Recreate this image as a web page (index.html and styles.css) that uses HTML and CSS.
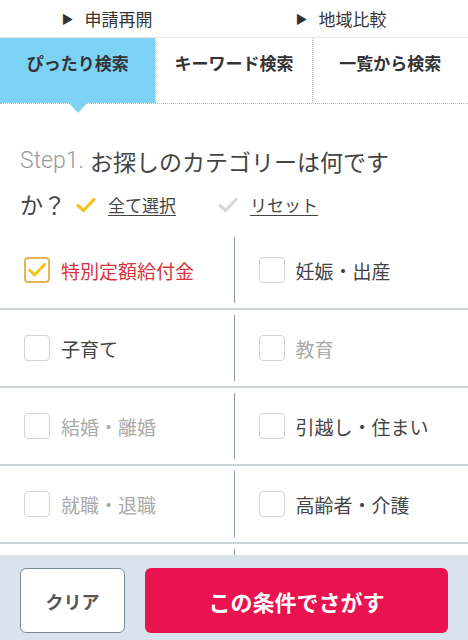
FILE: index.html
```html
<!DOCTYPE html>
<html lang="ja">
<head>
<title>カテゴリー検索</title>
<meta charset="UTF-8">
<meta name="viewport" content="width=device-width, initial-scale=1.0">

<link rel="stylesheet" href="styles.css">

</head>
<body>

<!-- *********************************************************
LINKS
********************************************************** -->

<div class="links">
	<a class="link" href="#"><span class="arrow">&#9654;</span>申請再開</a>
	<a class="link" href="#"><span class="arrow">&#9654;</span>地域比較</a>
</div>

<!-- *********************************************************
TABS
********************************************************** -->

<div class="tabs">
	<div class="tab active">ぴったり検索</div>
	<div class="tab">キーワード検索</div>
	<div class="tab">一覧から検索</div>
</div>

<!-- *********************************************************
STEP 1
********************************************************** -->

<div class="step">
	<div class="step-line">
		<span class="step-num">Step1.</span>
		<span class="step-title">お探しのカテゴリーは何です</span>
	</div>
	<div class="step-line">
		<span class="step-title">か？</span>
		<a class="step-action" href="#">
			<svg class="tick" width="20" height="16" viewBox="0 0 20 16"><path d="M2 8.5 L7.5 13.5 L18 2.5" fill="none" stroke="#f5c21b" stroke-width="3.2" stroke-linecap="round" stroke-linejoin="round"/></svg>
			<span class="action-text">全て選択</span>
		</a>
		<a class="step-action reset" href="#">
			<svg class="tick" width="20" height="16" viewBox="0 0 20 16"><path d="M2 8.5 L7.5 13.5 L18 2.5" fill="none" stroke="#d5d9dd" stroke-width="3.2" stroke-linecap="round" stroke-linejoin="round"/></svg>
			<span class="action-text">リセット</span>
		</a>
	</div>
</div>

<div class="cats">
	<div class="row">
		<label class="cat checked"><span class="box"><svg width="20" height="16" viewBox="0 0 20 16"><path d="M2.5 8 L7.5 13 L17.5 2.5" fill="none" stroke="#f5c21b" stroke-width="3" stroke-linecap="round" stroke-linejoin="round"/></svg></span>特別定額給付金</label>
		<div class="divider"></div>
		<label class="cat"><span class="box"></span>妊娠・出産</label>
	</div>
	<div class="row">
		<label class="cat"><span class="box"></span>子育て</label>
		<div class="divider"></div>
		<label class="cat off"><span class="box"></span>教育</label>
	</div>
	<div class="row">
		<label class="cat off"><span class="box"></span>結婚・離婚</label>
		<div class="divider"></div>
		<label class="cat"><span class="box"></span>引越し・住まい</label>
	</div>
	<div class="row">
		<label class="cat off"><span class="box"></span>就職・退職</label>
		<div class="divider"></div>
		<label class="cat"><span class="box"></span>高齢者・介護</label>
	</div>
	<!-- next row runs under the fixed bar -->
	<div class="row">
		<div class="cat"></div>
		<div class="divider"></div>
		<div class="cat"></div>
	</div>
</div>

<!-- *********************************************************
BOTTOM BAR
********************************************************** -->

<div class="bar">
	<button class="btn-clear">クリア</button>
	<button class="btn-search">この条件でさがす</button>
</div>

</body>
</html>
```

FILE: styles.css
```css
body{
	margin: 0px;
	font-family: "Noto Sans CJK JP", "Noto Sans", sans-serif;
	color: #444;
	background: #fff;
	overflow: hidden;
}

a{
	color: inherit;
	text-decoration: none;
}


/*********************************************************
LINKS
**********************************************************/

.links{
	display: flex;
	height: 37px;
	border-bottom: 1px solid #e6e6e6;
}

.link{
	flex: 1;
	display: flex;
	align-items: center;
	justify-content: center;
	padding-right: 20px;
	font-size: 17px;
	color: #333;
}

.arrow{
	font-size: 12px;
	margin-right: 11px;
}


/*********************************************************
TABS
**********************************************************/

.tabs{
	display: flex;
	height: 65px;
	border-bottom: 1px dotted #b8b8b8;
}

.tab{
	position: relative;
	flex: 1;
	text-align: center;
	padding-top: 12px;
	font-size: 17px;
	font-weight: bold;
	color: #333;
	border-left: 1px dotted #b8b8b8;
}

.tab:first-child{
	border-left: none;
}

.tab.active{
	background: #7dd3f5;
}

.tab.active:after{
	content: '';
	position: absolute;
	left: 50%;
	bottom: -10px;
	margin-left: -9px;
	border-left: 9px solid transparent;
	border-right: 9px solid transparent;
	border-top: 10px solid #7dd3f5;
}


/*********************************************************
STEP
**********************************************************/

.step{
	padding: 35px 20px 0px 20px;
	font-size: 23px;
	color: #444;
}

.step-line{
	display: flex;
	align-items: center;
	height: 43px;
	white-space: nowrap;
}

.step-num{
	font-family: Roboto, sans-serif;
	font-weight: 300;
	color: #9a9a9a;
	margin-right: 6px;
}

.step-action{
	display: flex;
	align-items: center;
	gap: 12px;
	margin-left: 10px;
	font-size: 17px;
	margin-top: 2px;
}

.action-text{
	text-decoration: underline;
	text-underline-offset: 3px;
}

.step-action.reset{
	margin-left: 42px;
}


/*********************************************************
CATEGORIES
**********************************************************/

.cats{
	margin-top: 7px;
}

.row{
	display: flex;
	height: 76px;
	border-bottom: 2px solid #ccd3d7;
}

.divider{
	width: 1px;
	margin: 5px 0px;
	background: #8a979d;
}

.cat{
	flex: 1;
	display: flex;
	align-items: center;
	gap: 11px;
	padding-left: 24px;
	font-size: 19px;
	color: #444;
}

.cat.off{
	color: #aaa;
}

.cat.checked{
	color: #d9343d;
}

.box{
	display: flex;
	align-items: center;
	justify-content: center;
	box-sizing: border-box;
	width: 26px;
	height: 26px;
	border: 1.5px solid #cfd4d7;
	border-radius: 4px;
}

.cat.checked .box{
	border: 2px solid #e6b552;
}


/*********************************************************
BOTTOM BAR
**********************************************************/

.bar{
	position: fixed;
	left: 0px;
	right: 0px;
	bottom: 0px;
	height: 85px;
	box-sizing: border-box;
	display: flex;
	gap: 20px;
	padding: 13px 20px 7px 20px;
	background: #d8e3ec;
}

.bar button{
	font-family: inherit;
	font-weight: bold;
	border-radius: 6px;
	cursor: pointer;
}

.btn-clear{
	width: 105px;
	background: #fff;
	border: 1.5px solid #7b8a94;
	font-size: 18px;
	color: #555;
}

.btn-search{
	flex: 1;
	background: #e8134f;
	border: none;
	font-size: 22px;
	color: #fff;
}
```
